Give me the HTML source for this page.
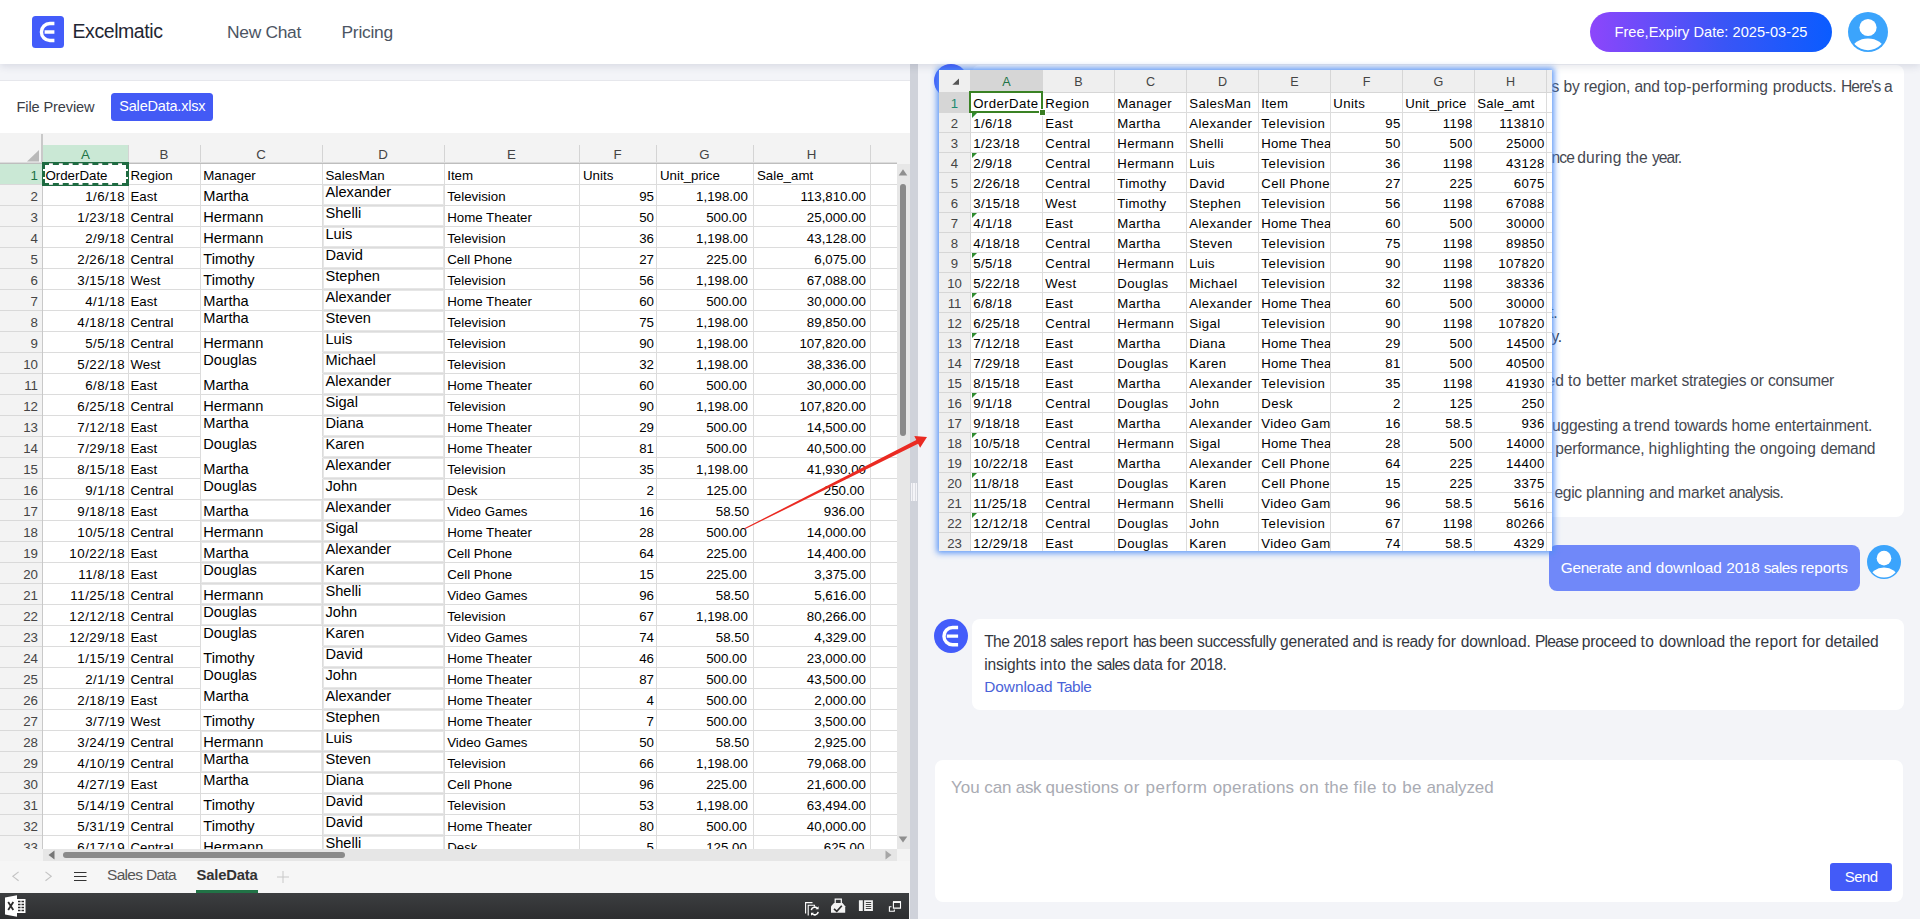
<!DOCTYPE html>
<html lang="en"><head><meta charset="utf-8"><title>Excelmatic</title>
<style>
*{box-sizing:border-box;margin:0;padding:0}
html,body{width:1920px;height:919px;overflow:hidden;background:#f3f4f8;font-family:"Liberation Sans",sans-serif;}
.t{position:absolute;white-space:nowrap;}
.a{position:absolute;}
#hdr{position:absolute;left:0;top:0;width:1920px;height:64px;background:#fff;box-shadow:0 2px 8px rgba(40,50,90,.14);z-index:5}
#left{position:absolute;left:0;top:80px;width:910px;height:839px;background:#fff;overflow:hidden}
#lline{position:absolute;left:0;top:80px;width:910px;height:1px;background:#e6e7ec}
#divd{position:absolute;left:910px;top:64px;width:7.500px;height:855px;background:#cfd2da}
/* sheet */
#sheet{position:absolute;left:0;top:53px;width:910px;height:786px;background:#f3f3f3;overflow:hidden;font-size:13.3px;color:#000}
.r{position:absolute;left:0;width:897px;height:21px;}
.r i,.r b,.r u,.r s,.r em{position:absolute;top:0;height:21px;font-style:normal;font-weight:400;text-decoration:none;white-space:nowrap;overflow:hidden;line-height:21px}
.rh{left:0;width:42px;text-align:right;padding:.7px 4px 0 0;color:#444;background:#f3f3f3;border-bottom:1px solid #d9d9d9}
.c{background:#fff;border-right:1px solid #dcdcdc;border-bottom:1px solid #dcdcdc;padding:1px 3px 0 3px}
.cA{left:43px;width:86px;text-align:right;padding-right:2.9px;letter-spacing:.5px}
.cB{left:129px;width:72px;padding-left:1.5px}
.cC{left:201px;width:122px;font-size:14.6px;padding-left:2.3px}
.cD{left:323px;width:122px;font-size:14.6px;padding-left:2.5px}
.cE{left:445px;width:135px;padding-left:2.2px}
.cF{left:580px;width:77px;text-align:right;padding-right:2px}
.cG{left:657px;width:97px;text-align:right;padding-right:5.2px}
.cH{left:754px;width:117px;text-align:right;padding-right:4px}
.cI{left:871px;width:26px;border-right:0}
.n{text-align:right}
</style></head><body>

<div id="hdr">
<div class="a" style="left:32px;top:16px;width:32px;height:32px;border-radius:3.5px;background:#435cfa"></div>
<svg class="a" style="left:32px;top:16px" width="32" height="32" viewBox="0 0 32 32"><path d="M22.4 7.5H17.9A8.5 8.5 0 0 0 17.9 24.5H22.4M12.600 16H22.4" fill="none" stroke="#fff" stroke-width="3.4"/></svg>
<span class="t" style="left:72.50px;top:20.14px;font-size:19.50px;line-height:23px;color:#1f2633;letter-spacing:-0.427px;">Excelmatic</span>
<span class="t" style="left:227.00px;top:21.87px;font-size:17.40px;line-height:21px;color:#4b5563;letter-spacing:-0.300px;">New Chat</span>
<span class="t" style="left:341.50px;top:21.87px;font-size:17.40px;line-height:21px;color:#4b5563;letter-spacing:-0.241px;">Pricing</span>
<div class="a" style="left:1590px;top:12px;width:242px;height:40px;border-radius:20px;background:linear-gradient(90deg,#8d46fb 0%,#3a55f6 55%,#0a5cff 100%)"></div>
<span class="t" style="left:1614.50px;top:22.94px;font-size:14.60px;line-height:18px;color:#fff;letter-spacing:0.024px;">Free,Expiry Date: 2025-03-25</span>
<svg class="a" style="left:1848px;top:12px" width="40" height="40" viewBox="0 0 40 40"><defs><clipPath id="cp"><circle cx="20" cy="20" r="18.2"/></clipPath></defs><circle cx="20" cy="20" r="20" fill="#3ba4fc"/><g clip-path="url(#cp)" fill="#fff"><circle cx="20" cy="15.5" r="8.6"/><ellipse cx="20" cy="38" rx="16" ry="11.5"/></g></svg>
</div>
<div id="divd"></div>
<div id="left"><div id="lline" style="top:0"></div>
<span class="t" style="left:16.50px;top:17.64px;font-size:14.60px;line-height:18px;color:#3a3d46;letter-spacing:-0.126px;">File Preview</span>
<div class="a" style="left:111px;top:13px;width:102px;height:28px;border-radius:3.5px;background:#435af5"></div>
<span class="t" style="left:119.30px;top:18.48px;font-size:14.50px;line-height:17px;color:#fff;letter-spacing:-0.204px;">SaleData.xlsx</span>
<div id="sheet">
<div class="a" style="left:41.4px;top:1px;width:1.800px;height:800px;background:#c9c9c9"></div>
<div class="a" style="left:43px;top:12px;width:85px;height:18px;background:#cae8d5"></div>
<span class="t" style="left:43px;top:12px;width:85px;text-align:center;font-size:13.3px;line-height:19px;color:#217346">A</span>
<div class="a" style="left:128px;top:12px;width:1px;height:18px;background:#d4d4d4"></div>
<span class="t" style="left:128px;top:12px;width:72px;text-align:center;font-size:13.3px;line-height:19px;color:#444">B</span>
<div class="a" style="left:200px;top:12px;width:1px;height:18px;background:#d4d4d4"></div>
<span class="t" style="left:200px;top:12px;width:122px;text-align:center;font-size:13.3px;line-height:19px;color:#444">C</span>
<div class="a" style="left:322px;top:12px;width:1px;height:18px;background:#d4d4d4"></div>
<span class="t" style="left:322px;top:12px;width:122px;text-align:center;font-size:13.3px;line-height:19px;color:#444">D</span>
<div class="a" style="left:444px;top:12px;width:1px;height:18px;background:#d4d4d4"></div>
<span class="t" style="left:444px;top:12px;width:135px;text-align:center;font-size:13.3px;line-height:19px;color:#444">E</span>
<div class="a" style="left:579px;top:12px;width:1px;height:18px;background:#d4d4d4"></div>
<span class="t" style="left:579px;top:12px;width:77px;text-align:center;font-size:13.3px;line-height:19px;color:#444">F</span>
<div class="a" style="left:656px;top:12px;width:1px;height:18px;background:#d4d4d4"></div>
<span class="t" style="left:656px;top:12px;width:97px;text-align:center;font-size:13.3px;line-height:19px;color:#444">G</span>
<div class="a" style="left:753px;top:12px;width:1px;height:18px;background:#d4d4d4"></div>
<span class="t" style="left:753px;top:12px;width:117px;text-align:center;font-size:13.3px;line-height:19px;color:#444">H</span>
<div class="a" style="left:870px;top:12px;width:1px;height:18px;background:#d4d4d4"></div>
<div class="a" style="left:0;top:29px;width:897px;height:1px;background:#dcdcdc"></div><div class="a" style="left:0;top:30px;width:897px;height:1px;background:#bebebe"></div>
<svg class="a" style="left:27px;top:17px" width="13" height="12" viewBox="0 0 13 12"><path d="M12 0V11.5H0Z" fill="#b9b9b9"/></svg>
<div class="r" style="top:31px">
<i class="rh" style="background:#cae8d5;color:#217346">1</i>
<i class="c cA" style="text-align:left;padding-left:2.4px;letter-spacing:0">OrderDate</i>
<i class="c cB">Region</i>
<i class="c cC" style="font-size:13.3px">Manager</i>
<i class="c cD" style="font-size:13.3px">SalesMan</i>
<i class="c cE">Item</i>
<i class="c cF" style="text-align:left;padding-left:3px;letter-spacing:0">Units</i>
<i class="c cG" style="text-align:left;padding-left:3px;letter-spacing:0">Unit_price</i>
<i class="c cH" style="text-align:left;padding-left:3px;letter-spacing:0">Sale_amt</i>
<i class="c cI"></i>
</div>
<div class="r" style="top:52px">
<i class="rh">2</i>
<i class="c cA">1/6/18</i>
<i class="c cB">East</i>
<i class="c cC">Martha</i>
<i class="c cD" style="line-height:13px;box-shadow:inset 0 0 0 1px #e6e6e6">Alexander</i>
<i class="c cE">Television</i>
<i class="c cF">95</i>
<i class="c cG">1,198.00</i>
<i class="c cH">113,810.00</i>
<i class="c cI"></i>
</div>
<div class="r" style="top:73px">
<i class="rh">3</i>
<i class="c cA">1/23/18</i>
<i class="c cB">Central</i>
<i class="c cC">Hermann</i>
<i class="c cD" style="line-height:13px;box-shadow:inset 0 0 0 1px #e6e6e6">Shelli</i>
<i class="c cE">Home Theater</i>
<i class="c cF">50</i>
<i class="c cG" style="padding-right:6.2px">500.00</i>
<i class="c cH">25,000.00</i>
<i class="c cI"></i>
</div>
<div class="r" style="top:94px">
<i class="rh">4</i>
<i class="c cA">2/9/18</i>
<i class="c cB">Central</i>
<i class="c cC">Hermann</i>
<i class="c cD" style="line-height:13px;box-shadow:inset 0 0 0 1px #e6e6e6">Luis</i>
<i class="c cE">Television</i>
<i class="c cF">36</i>
<i class="c cG">1,198.00</i>
<i class="c cH">43,128.00</i>
<i class="c cI"></i>
</div>
<div class="r" style="top:115px">
<i class="rh">5</i>
<i class="c cA">2/26/18</i>
<i class="c cB">Central</i>
<i class="c cC">Timothy</i>
<i class="c cD" style="line-height:13px;box-shadow:inset 0 0 0 1px #e6e6e6">David</i>
<i class="c cE">Cell Phone</i>
<i class="c cF">27</i>
<i class="c cG" style="padding-right:6.2px">225.00</i>
<i class="c cH">6,075.00</i>
<i class="c cI"></i>
</div>
<div class="r" style="top:136px">
<i class="rh">6</i>
<i class="c cA">3/15/18</i>
<i class="c cB">West</i>
<i class="c cC">Timothy</i>
<i class="c cD" style="line-height:13px;box-shadow:inset 0 0 0 1px #e6e6e6">Stephen</i>
<i class="c cE">Television</i>
<i class="c cF">56</i>
<i class="c cG">1,198.00</i>
<i class="c cH">67,088.00</i>
<i class="c cI"></i>
</div>
<div class="r" style="top:157px">
<i class="rh">7</i>
<i class="c cA">4/1/18</i>
<i class="c cB">East</i>
<i class="c cC">Martha</i>
<i class="c cD" style="line-height:13px;box-shadow:inset 0 0 0 1px #e6e6e6">Alexander</i>
<i class="c cE">Home Theater</i>
<i class="c cF">60</i>
<i class="c cG" style="padding-right:6.2px">500.00</i>
<i class="c cH">30,000.00</i>
<i class="c cI"></i>
</div>
<div class="r" style="top:178px">
<i class="rh">8</i>
<i class="c cA">4/18/18</i>
<i class="c cB">Central</i>
<i class="c cC" style="line-height:13px;">Martha</i>
<i class="c cD" style="line-height:13px;box-shadow:inset 0 0 0 1px #e6e6e6">Steven</i>
<i class="c cE">Television</i>
<i class="c cF">75</i>
<i class="c cG">1,198.00</i>
<i class="c cH">89,850.00</i>
<i class="c cI"></i>
</div>
<div class="r" style="top:199px">
<i class="rh">9</i>
<i class="c cA">5/5/18</i>
<i class="c cB">Central</i>
<i class="c cC" style="border-bottom-color:#fff;">Hermann</i>
<i class="c cD" style="line-height:13px;box-shadow:inset 0 0 0 1px #e6e6e6">Luis</i>
<i class="c cE">Television</i>
<i class="c cF">90</i>
<i class="c cG">1,198.00</i>
<i class="c cH">107,820.00</i>
<i class="c cI"></i>
</div>
<div class="r" style="top:220px">
<i class="rh">10</i>
<i class="c cA">5/22/18</i>
<i class="c cB">West</i>
<i class="c cC" style="line-height:13px;border-bottom-color:#fff;">Douglas</i>
<i class="c cD" style="line-height:13px;box-shadow:inset 0 0 0 1px #e6e6e6">Michael</i>
<i class="c cE">Television</i>
<i class="c cF">32</i>
<i class="c cG">1,198.00</i>
<i class="c cH">38,336.00</i>
<i class="c cI"></i>
</div>
<div class="r" style="top:241px">
<i class="rh">11</i>
<i class="c cA">6/8/18</i>
<i class="c cB">East</i>
<i class="c cC">Martha</i>
<i class="c cD" style="line-height:13px;box-shadow:inset 0 0 0 1px #e6e6e6">Alexander</i>
<i class="c cE">Home Theater</i>
<i class="c cF">60</i>
<i class="c cG" style="padding-right:6.2px">500.00</i>
<i class="c cH">30,000.00</i>
<i class="c cI"></i>
</div>
<div class="r" style="top:262px">
<i class="rh">12</i>
<i class="c cA">6/25/18</i>
<i class="c cB">Central</i>
<i class="c cC">Hermann</i>
<i class="c cD" style="line-height:13px;box-shadow:inset 0 0 0 1px #e6e6e6">Sigal</i>
<i class="c cE">Television</i>
<i class="c cF">90</i>
<i class="c cG">1,198.00</i>
<i class="c cH">107,820.00</i>
<i class="c cI"></i>
</div>
<div class="r" style="top:283px">
<i class="rh">13</i>
<i class="c cA">7/12/18</i>
<i class="c cB">East</i>
<i class="c cC" style="line-height:13px;border-bottom-color:#fff;">Martha</i>
<i class="c cD" style="line-height:13px;box-shadow:inset 0 0 0 1px #e6e6e6">Diana</i>
<i class="c cE">Home Theater</i>
<i class="c cF">29</i>
<i class="c cG" style="padding-right:6.2px">500.00</i>
<i class="c cH">14,500.00</i>
<i class="c cI"></i>
</div>
<div class="r" style="top:304px">
<i class="rh">14</i>
<i class="c cA">7/29/18</i>
<i class="c cB">East</i>
<i class="c cC" style="line-height:13px;border-bottom-color:#fff;">Douglas</i>
<i class="c cD" style="line-height:13px;box-shadow:inset 0 0 0 1px #e6e6e6">Karen</i>
<i class="c cE">Home Theater</i>
<i class="c cF">81</i>
<i class="c cG" style="padding-right:6.2px">500.00</i>
<i class="c cH">40,500.00</i>
<i class="c cI"></i>
</div>
<div class="r" style="top:325px">
<i class="rh">15</i>
<i class="c cA">8/15/18</i>
<i class="c cB">East</i>
<i class="c cC" style="border-bottom-color:#fff;">Martha</i>
<i class="c cD" style="line-height:13px;box-shadow:inset 0 0 0 1px #e6e6e6">Alexander</i>
<i class="c cE">Television</i>
<i class="c cF">35</i>
<i class="c cG">1,198.00</i>
<i class="c cH">41,930.00</i>
<i class="c cI"></i>
</div>
<div class="r" style="top:346px">
<i class="rh">16</i>
<i class="c cA">9/1/18</i>
<i class="c cB">Central</i>
<i class="c cC" style="line-height:13px;">Douglas</i>
<i class="c cD" style="line-height:13px;box-shadow:inset 0 0 0 1px #e6e6e6">John</i>
<i class="c cE">Desk</i>
<i class="c cF">2</i>
<i class="c cG" style="padding-right:6.2px">125.00</i>
<i class="c cH" style="padding-right:5.6px">250.00</i>
<i class="c cI"></i>
</div>
<div class="r" style="top:367px">
<i class="rh">17</i>
<i class="c cA">9/18/18</i>
<i class="c cB">East</i>
<i class="c cC" style="box-shadow:inset 0 0 0 1px #e6e6e6;">Martha</i>
<i class="c cD" style="line-height:13px;box-shadow:inset 0 0 0 1px #e6e6e6">Alexander</i>
<i class="c cE">Video Games</i>
<i class="c cF">16</i>
<i class="c cG" style="padding-right:3.9px">58.50</i>
<i class="c cH" style="padding-right:5.6px">936.00</i>
<i class="c cI"></i>
</div>
<div class="r" style="top:388px">
<i class="rh">18</i>
<i class="c cA">10/5/18</i>
<i class="c cB">Central</i>
<i class="c cC" style="box-shadow:inset 0 0 0 1px #e6e6e6;">Hermann</i>
<i class="c cD" style="line-height:13px;box-shadow:inset 0 0 0 1px #e6e6e6">Sigal</i>
<i class="c cE">Home Theater</i>
<i class="c cF">28</i>
<i class="c cG" style="padding-right:6.2px">500.00</i>
<i class="c cH">14,000.00</i>
<i class="c cI"></i>
</div>
<div class="r" style="top:409px">
<i class="rh">19</i>
<i class="c cA">10/22/18</i>
<i class="c cB">East</i>
<i class="c cC" style="box-shadow:inset 0 0 0 1px #e6e6e6;">Martha</i>
<i class="c cD" style="line-height:13px;box-shadow:inset 0 0 0 1px #e6e6e6">Alexander</i>
<i class="c cE">Cell Phone</i>
<i class="c cF">64</i>
<i class="c cG" style="padding-right:6.2px">225.00</i>
<i class="c cH">14,400.00</i>
<i class="c cI"></i>
</div>
<div class="r" style="top:430px">
<i class="rh">20</i>
<i class="c cA">11/8/18</i>
<i class="c cB">East</i>
<i class="c cC" style="line-height:13px;box-shadow:inset 0 0 0 1px #e6e6e6;">Douglas</i>
<i class="c cD" style="line-height:13px;box-shadow:inset 0 0 0 1px #e6e6e6">Karen</i>
<i class="c cE">Cell Phone</i>
<i class="c cF">15</i>
<i class="c cG" style="padding-right:6.2px">225.00</i>
<i class="c cH">3,375.00</i>
<i class="c cI"></i>
</div>
<div class="r" style="top:451px">
<i class="rh">21</i>
<i class="c cA">11/25/18</i>
<i class="c cB">Central</i>
<i class="c cC" style="box-shadow:inset 0 0 0 1px #e6e6e6;">Hermann</i>
<i class="c cD" style="line-height:13px;box-shadow:inset 0 0 0 1px #e6e6e6">Shelli</i>
<i class="c cE">Video Games</i>
<i class="c cF">96</i>
<i class="c cG" style="padding-right:3.9px">58.50</i>
<i class="c cH">5,616.00</i>
<i class="c cI"></i>
</div>
<div class="r" style="top:472px">
<i class="rh">22</i>
<i class="c cA">12/12/18</i>
<i class="c cB">Central</i>
<i class="c cC" style="line-height:13px;box-shadow:inset 0 0 0 1px #e6e6e6;">Douglas</i>
<i class="c cD" style="line-height:13px;box-shadow:inset 0 0 0 1px #e6e6e6">John</i>
<i class="c cE">Television</i>
<i class="c cF">67</i>
<i class="c cG">1,198.00</i>
<i class="c cH">80,266.00</i>
<i class="c cI"></i>
</div>
<div class="r" style="top:493px">
<i class="rh">23</i>
<i class="c cA">12/29/18</i>
<i class="c cB">East</i>
<i class="c cC" style="line-height:13px;border-bottom-color:#fff;">Douglas</i>
<i class="c cD" style="line-height:13px;box-shadow:inset 0 0 0 1px #e6e6e6">Karen</i>
<i class="c cE">Video Games</i>
<i class="c cF">74</i>
<i class="c cG" style="padding-right:3.9px">58.50</i>
<i class="c cH">4,329.00</i>
<i class="c cI"></i>
</div>
<div class="r" style="top:514px">
<i class="rh">24</i>
<i class="c cA">1/15/19</i>
<i class="c cB">Central</i>
<i class="c cC" style="border-bottom-color:#fff;">Timothy</i>
<i class="c cD" style="line-height:13px;box-shadow:inset 0 0 0 1px #e6e6e6">David</i>
<i class="c cE">Home Theater</i>
<i class="c cF">46</i>
<i class="c cG" style="padding-right:6.2px">500.00</i>
<i class="c cH">23,000.00</i>
<i class="c cI"></i>
</div>
<div class="r" style="top:535px">
<i class="rh">25</i>
<i class="c cA">2/1/19</i>
<i class="c cB">Central</i>
<i class="c cC" style="line-height:13px;border-bottom-color:#fff;">Douglas</i>
<i class="c cD" style="line-height:13px;box-shadow:inset 0 0 0 1px #e6e6e6">John</i>
<i class="c cE">Home Theater</i>
<i class="c cF">87</i>
<i class="c cG" style="padding-right:6.2px">500.00</i>
<i class="c cH">43,500.00</i>
<i class="c cI"></i>
</div>
<div class="r" style="top:556px">
<i class="rh">26</i>
<i class="c cA">2/18/19</i>
<i class="c cB">East</i>
<i class="c cC" style="line-height:13px;">Martha</i>
<i class="c cD" style="line-height:13px;box-shadow:inset 0 0 0 1px #e6e6e6">Alexander</i>
<i class="c cE">Home Theater</i>
<i class="c cF">4</i>
<i class="c cG" style="padding-right:6.2px">500.00</i>
<i class="c cH">2,000.00</i>
<i class="c cI"></i>
</div>
<div class="r" style="top:577px">
<i class="rh">27</i>
<i class="c cA">3/7/19</i>
<i class="c cB">West</i>
<i class="c cC">Timothy</i>
<i class="c cD" style="line-height:13px;box-shadow:inset 0 0 0 1px #e6e6e6">Stephen</i>
<i class="c cE">Home Theater</i>
<i class="c cF">7</i>
<i class="c cG" style="padding-right:6.2px">500.00</i>
<i class="c cH">3,500.00</i>
<i class="c cI"></i>
</div>
<div class="r" style="top:598px">
<i class="rh">28</i>
<i class="c cA">3/24/19</i>
<i class="c cB">Central</i>
<i class="c cC" style="box-shadow:inset 0 0 0 1px #e6e6e6;">Hermann</i>
<i class="c cD" style="line-height:13px;box-shadow:inset 0 0 0 1px #e6e6e6">Luis</i>
<i class="c cE">Video Games</i>
<i class="c cF">50</i>
<i class="c cG" style="padding-right:3.9px">58.50</i>
<i class="c cH">2,925.00</i>
<i class="c cI"></i>
</div>
<div class="r" style="top:619px">
<i class="rh">29</i>
<i class="c cA">4/10/19</i>
<i class="c cB">Central</i>
<i class="c cC" style="line-height:13px;box-shadow:inset 0 0 0 1px #e6e6e6;">Martha</i>
<i class="c cD" style="line-height:13px;box-shadow:inset 0 0 0 1px #e6e6e6">Steven</i>
<i class="c cE">Television</i>
<i class="c cF">66</i>
<i class="c cG">1,198.00</i>
<i class="c cH">79,068.00</i>
<i class="c cI"></i>
</div>
<div class="r" style="top:640px">
<i class="rh">30</i>
<i class="c cA">4/27/19</i>
<i class="c cB">East</i>
<i class="c cC" style="line-height:13px;">Martha</i>
<i class="c cD" style="line-height:13px;box-shadow:inset 0 0 0 1px #e6e6e6">Diana</i>
<i class="c cE">Cell Phone</i>
<i class="c cF">96</i>
<i class="c cG" style="padding-right:6.2px">225.00</i>
<i class="c cH">21,600.00</i>
<i class="c cI"></i>
</div>
<div class="r" style="top:661px">
<i class="rh">31</i>
<i class="c cA">5/14/19</i>
<i class="c cB">Central</i>
<i class="c cC">Timothy</i>
<i class="c cD" style="line-height:13px;box-shadow:inset 0 0 0 1px #e6e6e6">David</i>
<i class="c cE">Television</i>
<i class="c cF">53</i>
<i class="c cG">1,198.00</i>
<i class="c cH">63,494.00</i>
<i class="c cI"></i>
</div>
<div class="r" style="top:682px">
<i class="rh">32</i>
<i class="c cA">5/31/19</i>
<i class="c cB">Central</i>
<i class="c cC">Timothy</i>
<i class="c cD" style="line-height:13px;box-shadow:inset 0 0 0 1px #e6e6e6">David</i>
<i class="c cE">Home Theater</i>
<i class="c cF">80</i>
<i class="c cG" style="padding-right:6.2px">500.00</i>
<i class="c cH">40,000.00</i>
<i class="c cI"></i>
</div>
<div class="r" style="top:703px">
<i class="rh">33</i>
<i class="c cA">6/17/19</i>
<i class="c cB">Central</i>
<i class="c cC">Hermann</i>
<i class="c cD" style="line-height:13px;box-shadow:inset 0 0 0 1px #e6e6e6">Shelli</i>
<i class="c cE">Desk</i>
<i class="c cF">5</i>
<i class="c cG" style="padding-right:6.2px">125.00</i>
<i class="c cH" style="padding-right:5.6px">625.00</i>
<i class="c cI"></i>
</div>
<div class="a" style="left:41.5px;top:29px;width:87.5px;height:24px;border:1px solid #1e6b41"><div style="width:100%;height:100%;border:2px dashed #1e6b41"></div></div>
<div class="a" style="left:897px;top:31px;width:13px;height:686px;background:#e7e7e7"></div>
<svg class="a" style="left:898px;top:36px" width="10" height="7" viewBox="0 0 10 7"><path d="M5 0.3L9.3 6.500H0.700Z" fill="#8f8f8f"/></svg>
<div class="a" style="left:900px;top:51px;width:6px;height:252px;border-radius:3px;background:#8a8a8a"></div>
<svg class="a" style="left:898px;top:703px" width="10" height="7" viewBox="0 0 10 7"><path d="M5 6.500L9.300 0.500H0.700Z" fill="#8f8f8f"/></svg>
<div class="a" style="left:0;top:716px;width:910px;height:13px;background:#f3f3f3"></div>
<div class="a" style="left:43px;top:716px;width:854px;height:12px;background:#e6e6e6"></div>
<svg class="a" style="left:48px;top:717px" width="7" height="10" viewBox="0 0 7 10"><path d="M0.5 5L6.5 0.5V9.5Z" fill="#777"/></svg>
<svg class="a" style="left:885px;top:717px" width="7" height="10" viewBox="0 0 7 10"><path d="M6.5 5L0.5 0.5V9.5Z" fill="#a6a6a6"/></svg>
<div class="a" style="left:63px;top:719px;width:282px;height:6px;border-radius:3px;background:#8a8a8a"></div>
<div class="a" style="left:0;top:728px;width:910px;height:32px;background:#f6f6f6"></div>
<svg class="a" style="left:10px;top:738px" width="50" height="14" viewBox="0 0 50 14"><path d="M8.600 0.900L2.900 5.350L8.600 9.800M35.500 0.900L41.200 5.350L35.500 9.800" fill="none" stroke="#c4c4c4" stroke-width="1.2"/></svg>
<svg class="a" style="left:74px;top:738px" width="13" height="12" viewBox="0 0 13 12"><path d="M0 1.5H12.5M0 5.5H12.5M0 9.5H12.5" stroke="#333" stroke-width="1.2"/></svg>
<span class="t" style="left:107.00px;top:732.23px;font-size:15.50px;line-height:19px;color:#555;letter-spacing:-0.682px;">Sales Data</span>
<span class="t" style="left:196.50px;top:732.87px;font-size:14.80px;line-height:18px;color:#333;font-weight:700;letter-spacing:-0.191px;">SaleData</span>
<svg class="a" style="left:277px;top:738px" width="12" height="12" viewBox="0 0 12 12"><path d="M6 0V12M0 6H12" stroke="#c8c8c8" stroke-width="1"/></svg>
<div class="a" style="left:196px;top:757px;width:62px;height:3px;background:#217346"></div>
<div class="a" style="left:0;top:760px;width:910px;height:26px;background:#f0f0f0"></div><div class="a" style="left:0;top:760px;width:909px;height:26px;background:linear-gradient(#3c3e40,#2d2e30)"></div>
<svg class="a" style="left:5px;top:762px" width="21" height="22" viewBox="0 0 21 22"><path d="M9 4H20.5V18H9Z" fill="#fff"/><path d="M13 6.5h2.5M16.5 6.5H19M13 9.5h2.5M16.5 9.5H19M13 12.5h2.5M16.5 12.5H19M13 15.5h2.5M16.5 15.5H19" stroke="#2d2d2d" stroke-width="1.6"/><path d="M0 2.5L12 0.3V21.7L0 19.5Z" fill="#fff"/><path d="M3.2 7L8.3 15M8.3 7L3.2 15" stroke="#2d2d2d" stroke-width="1.8"/></svg>
<svg class="a" style="left:803px;top:764px" width="100" height="20" viewBox="0 0 100 20" fill="none" stroke="#fff" stroke-width="1.1"><path d="M2.600 16.500V5.600H9.500M5.200 18.600V8.200H11.500V9.500"/><path d="M8.300 13.200a3.500 3.500 0 0 1 6.300-1.600M15.200 14.800a3.500 3.500 0 0 1-6.300 1.600" stroke-width="1.500"/><path d="M15.600 9.300v2.900h-2.900ZM8 18.700v-2.900h2.900Z" fill="#fff" stroke="none"/><path d="M31 5.900H39.500L42.200 9.250V15.700H28V9.250Z" fill="#f2f2f2" stroke="none"/><path d="M32.200 6V2.200H38.300V6" stroke-width="1.200"/><path d="M31 11.800L33.800 14.300L38.800 8.700" stroke="#2d2d2d" stroke-width="1.700"/><path d="M55.900 3.200H59.800V14H55.900ZM61.100 3.200H69.900V14H61.100Z" fill="#f2f2f2" stroke="none"/><path d="M62.800 5.500h5.400M62.800 7.500h5.400M62.800 9.500h5.400M62.800 11.500h5.400" stroke="#444" stroke-width="1"/><path d="M90.400 5.200H97.500V11.100H90.400Z"/><path d="M90 5H98" stroke-width="1.800"/><path d="M88.500 9.800H86.400V14.200H91.300V12.500"/></svg>
</div>
</div>
<style>
#ov{position:absolute;left:939px;top:70px;width:613px;height:481px;background:#fff;overflow:hidden;font-size:13.2px;color:#000;z-index:7}
#ovg{position:absolute;left:939px;top:70px;width:613px;height:481px;z-index:6;box-shadow:0 0 6px 2px rgba(75,140,245,.92)}
.o{position:absolute;left:0;width:613px;height:20px}
.o i{position:absolute;top:0;height:20px;font-style:normal;white-space:nowrap;overflow:hidden;line-height:20px;letter-spacing:.42px;border-right:1px solid #dcdcdc;border-bottom:1px solid #dcdcdc;padding:1px 0 0 2.2px;width:72px;background:#fff}
.o .h{left:0;width:32px;background:#efefef;color:#444;text-align:center;padding-left:0;letter-spacing:0;border-color:#d6d6d6}
.o .n{text-align:right;padding-right:1.3px}
.k0{left:32px}.k1{left:104px}.k2{left:176px}.k3{left:248px}.k4{left:320px}.k5{left:392px}.k6{left:464px}.k7{left:536px}.k8{left:608px}
.g{position:absolute;left:33px;width:0;height:0;border-top:5px solid #2e8b2e;border-right:5px solid transparent}
.card{position:absolute;background:#fff;border-radius:8px}
</style>
<div class="card" style="left:972px;top:65px;width:932px;height:452px"></div>
<svg class="a" style="left:934px;top:64px" width="34" height="34" viewBox="0 0 34 34"><circle cx="17" cy="17" r="17" fill="#435cfa"/><path d="M24.100 8.550H18.550A8.600 8.600 0 0 0 18.550 25.750H24.100M12.800 17.150H24.100" fill="none" stroke="#fff" stroke-width="3.400"/></svg>
<span class="t" style="left:1551.60px;top:76.89px;font-size:15.60px;line-height:19px;color:#454851;letter-spacing:-0.167px;white-space:pre;">s </span><span class="t" style="left:1563.40px;top:76.89px;font-size:15.60px;line-height:19px;color:#454851;letter-spacing:-0.137px;white-space:pre;">by </span><span class="t" style="left:1583.80px;top:76.89px;font-size:15.60px;line-height:19px;color:#454851;letter-spacing:-0.179px;white-space:pre;">region, </span><span class="t" style="left:1634.40px;top:76.89px;font-size:15.60px;line-height:19px;color:#454851;letter-spacing:-0.191px;white-space:pre;">and </span><span class="t" style="left:1664.00px;top:76.89px;font-size:15.60px;line-height:19px;color:#454851;letter-spacing:0.201px;white-space:pre;">top-performing </span><span class="t" style="left:1772.80px;top:76.89px;font-size:15.60px;line-height:19px;color:#454851;letter-spacing:-0.040px;white-space:pre;">products. </span><span class="t" style="left:1840.90px;top:76.89px;font-size:15.60px;line-height:19px;color:#454851;letter-spacing:-0.832px;white-space:pre;">Here&#x27;s </span><span class="t" style="left:1884.00px;top:76.89px;font-size:15.60px;line-height:19px;color:#454851;letter-spacing:-1.376px;">a</span>
<span class="t" style="left:1551.60px;top:148.09px;font-size:15.60px;line-height:19px;color:#454851;letter-spacing:-0.947px;white-space:pre;">nce </span><span class="t" style="left:1577.30px;top:148.09px;font-size:15.60px;line-height:19px;color:#454851;letter-spacing:0.143px;white-space:pre;">during </span><span class="t" style="left:1626.00px;top:148.09px;font-size:15.60px;line-height:19px;color:#454851;letter-spacing:-0.030px;white-space:pre;">the </span><span class="t" style="left:1651.90px;top:148.09px;font-size:15.60px;line-height:19px;color:#454851;letter-spacing:-0.884px;">year.</span>
<span class="t" style="left:1549.30px;top:303.49px;font-size:15.60px;line-height:19px;color:#34373f;letter-spacing:-0.334px;">t.</span>
<span class="t" style="left:1551.60px;top:327.09px;font-size:15.60px;line-height:19px;color:#34373f;letter-spacing:-0.588px;">y.</span>
<span class="t" style="left:1546.60px;top:370.89px;font-size:15.60px;line-height:19px;color:#454851;letter-spacing:-0.129px;white-space:pre;">ed </span><span class="t" style="left:1567.90px;top:370.89px;font-size:15.60px;line-height:19px;color:#454851;letter-spacing:0.219px;white-space:pre;">to </span><span class="t" style="left:1585.90px;top:370.89px;font-size:15.60px;line-height:19px;color:#454851;letter-spacing:0.025px;white-space:pre;">better </span><span class="t" style="left:1630.30px;top:370.89px;font-size:15.60px;line-height:19px;color:#454851;letter-spacing:-0.116px;white-space:pre;">market </span><span class="t" style="left:1681.50px;top:370.89px;font-size:15.60px;line-height:19px;color:#454851;letter-spacing:-0.288px;white-space:pre;">strategies </span><span class="t" style="left:1750.30px;top:370.89px;font-size:15.60px;line-height:19px;color:#454851;letter-spacing:-0.135px;white-space:pre;">or </span><span class="t" style="left:1768.10px;top:370.89px;font-size:15.60px;line-height:19px;color:#454851;letter-spacing:-0.325px;">consumer</span>
<span class="t" style="left:1552.10px;top:415.89px;font-size:15.60px;line-height:19px;color:#454851;letter-spacing:-0.179px;white-space:pre;">uggesting </span><span class="t" style="left:1622.30px;top:415.89px;font-size:15.60px;line-height:19px;color:#454851;letter-spacing:-0.605px;white-space:pre;">a </span><span class="t" style="left:1634.10px;top:415.89px;font-size:15.60px;line-height:19px;color:#454851;letter-spacing:0.068px;white-space:pre;">trend </span><span class="t" style="left:1674.40px;top:415.89px;font-size:15.60px;line-height:19px;color:#454851;letter-spacing:-0.220px;white-space:pre;">towards </span><span class="t" style="left:1731.60px;top:415.89px;font-size:15.60px;line-height:19px;color:#454851;letter-spacing:-0.052px;white-space:pre;">home </span><span class="t" style="left:1774.70px;top:415.89px;font-size:15.60px;line-height:19px;color:#454851;letter-spacing:-0.152px;">entertainment.</span>
<span class="t" style="left:1555.30px;top:438.79px;font-size:15.60px;line-height:19px;color:#454851;letter-spacing:-0.234px;white-space:pre;">performance, </span><span class="t" style="left:1648.50px;top:438.79px;font-size:15.60px;line-height:19px;color:#454851;letter-spacing:0.203px;white-space:pre;">highlighting </span><span class="t" style="left:1734.40px;top:438.79px;font-size:15.60px;line-height:19px;color:#454851;letter-spacing:-0.180px;white-space:pre;">the </span><span class="t" style="left:1759.70px;top:438.79px;font-size:15.60px;line-height:19px;color:#454851;letter-spacing:0.130px;white-space:pre;">ongoing </span><span class="t" style="left:1820.60px;top:438.79px;font-size:15.60px;line-height:19px;color:#454851;letter-spacing:-0.296px;">demand</span>
<span class="t" style="left:1554.40px;top:483.09px;font-size:15.60px;line-height:19px;color:#454851;letter-spacing:-0.291px;white-space:pre;">egic </span><span class="t" style="left:1585.90px;top:483.09px;font-size:15.60px;line-height:19px;color:#454851;letter-spacing:-0.014px;white-space:pre;">planning </span><span class="t" style="left:1649.10px;top:483.09px;font-size:15.60px;line-height:19px;color:#454851;letter-spacing:-0.341px;white-space:pre;">and </span><span class="t" style="left:1678.10px;top:483.09px;font-size:15.60px;line-height:19px;color:#454851;letter-spacing:-0.187px;white-space:pre;">market </span><span class="t" style="left:1728.80px;top:483.09px;font-size:15.60px;line-height:19px;color:#454851;letter-spacing:-0.711px;">analysis.</span>
<div class="a" style="left:1549px;top:545px;width:311px;height:46px;border-radius:8px;background:#7088f9"></div>
<span class="t" style="left:1560.80px;top:558.66px;font-size:15.40px;line-height:18px;color:#fff;letter-spacing:-0.343px;white-space:pre;">Generate </span><span class="t" style="left:1626.20px;top:558.66px;font-size:15.40px;line-height:18px;color:#fff;letter-spacing:-0.093px;white-space:pre;">and </span><span class="t" style="left:1655.80px;top:558.66px;font-size:15.40px;line-height:18px;color:#fff;letter-spacing:0.032px;white-space:pre;">download </span><span class="t" style="left:1726.30px;top:558.66px;font-size:15.40px;line-height:18px;color:#fff;letter-spacing:-0.228px;white-space:pre;">2018 </span><span class="t" style="left:1763.70px;top:558.66px;font-size:15.40px;line-height:18px;color:#fff;letter-spacing:-0.522px;white-space:pre;">sales </span><span class="t" style="left:1800.80px;top:558.66px;font-size:15.40px;line-height:18px;color:#fff;letter-spacing:-0.133px;">reports</span>
<svg class="a" style="left:1866.9px;top:545.2px" width="34" height="34" viewBox="0 0 40 40"><circle cx="20" cy="20" r="20" fill="#3ba4fc"/><g clip-path="url(#cp)" fill="#fff"><circle cx="20" cy="15.5" r="8.6"/><ellipse cx="20" cy="38" rx="16" ry="11.500"/></g></svg>
<svg class="a" style="left:934px;top:619px" width="34" height="34" viewBox="0 0 34 34"><circle cx="17" cy="17" r="17" fill="#435cfa"/><path d="M24.100 8.550H18.550A8.600 8.600 0 0 0 18.550 25.750H24.100M12.800 17.150H24.100" fill="none" stroke="#fff" stroke-width="3.400"/></svg>
<div class="card" style="left:972px;top:619px;width:932px;height:91px"></div>
<span class="t" style="left:984.20px;top:632.49px;font-size:15.60px;line-height:19px;color:#34373f;letter-spacing:-0.604px;white-space:pre;">The </span><span class="t" style="left:1013.00px;top:632.49px;font-size:15.60px;line-height:19px;color:#34373f;letter-spacing:-0.408px;white-space:pre;">2018 </span><span class="t" style="left:1050.00px;top:632.49px;font-size:15.60px;line-height:19px;color:#34373f;letter-spacing:-0.759px;white-space:pre;">sales </span><span class="t" style="left:1086.20px;top:632.49px;font-size:15.60px;line-height:19px;color:#34373f;letter-spacing:0.245px;white-space:pre;">report </span><span class="t" style="left:1133.00px;top:632.49px;font-size:15.60px;line-height:19px;color:#34373f;letter-spacing:-0.822px;white-space:pre;">has </span><span class="t" style="left:1159.20px;top:632.49px;font-size:15.60px;line-height:19px;color:#34373f;letter-spacing:-0.248px;white-space:pre;">been </span><span class="t" style="left:1197.00px;top:632.49px;font-size:15.60px;line-height:19px;color:#34373f;letter-spacing:-0.418px;white-space:pre;">successfully </span><span class="t" style="left:1280.00px;top:632.49px;font-size:15.60px;line-height:19px;color:#34373f;letter-spacing:-0.210px;white-space:pre;">generated </span><span class="t" style="left:1352.50px;top:632.49px;font-size:15.60px;line-height:19px;color:#34373f;letter-spacing:-0.141px;white-space:pre;">and </span><span class="t" style="left:1382.30px;top:632.49px;font-size:15.60px;line-height:19px;color:#34373f;letter-spacing:-0.467px;white-space:pre;">is </span><span class="t" style="left:1396.50px;top:632.49px;font-size:15.60px;line-height:19px;color:#34373f;letter-spacing:-0.410px;white-space:pre;">ready </span><span class="t" style="left:1437.40px;top:632.49px;font-size:15.60px;line-height:19px;color:#34373f;letter-spacing:0.190px;white-space:pre;">for </span><span class="t" style="left:1460.70px;top:632.49px;font-size:15.60px;line-height:19px;color:#34373f;letter-spacing:-0.126px;white-space:pre;">download. </span><span class="t" style="left:1534.90px;top:632.49px;font-size:15.60px;line-height:19px;color:#34373f;letter-spacing:-0.734px;white-space:pre;">Please </span><span class="t" style="left:1581.80px;top:632.49px;font-size:15.60px;line-height:19px;color:#34373f;letter-spacing:-0.239px;white-space:pre;">proceed </span><span class="t" style="left:1640.60px;top:632.49px;font-size:15.60px;line-height:19px;color:#34373f;letter-spacing:0.352px;white-space:pre;">to </span><span class="t" style="left:1659.00px;top:632.49px;font-size:15.60px;line-height:19px;color:#34373f;letter-spacing:-0.080px;white-space:pre;">download </span><span class="t" style="left:1729.40px;top:632.49px;font-size:15.60px;line-height:19px;color:#34373f;letter-spacing:-0.080px;white-space:pre;">the </span><span class="t" style="left:1755.10px;top:632.49px;font-size:15.60px;line-height:19px;color:#34373f;letter-spacing:0.259px;white-space:pre;">report </span><span class="t" style="left:1802.00px;top:632.49px;font-size:15.60px;line-height:19px;color:#34373f;letter-spacing:0.115px;white-space:pre;">for </span><span class="t" style="left:1825.00px;top:632.49px;font-size:15.60px;line-height:19px;color:#34373f;letter-spacing:-0.143px;">detailed</span>
<span class="t" style="left:984.20px;top:655.09px;font-size:15.60px;line-height:19px;color:#34373f;letter-spacing:-0.159px;white-space:pre;">insights </span><span class="t" style="left:1040.00px;top:655.09px;font-size:15.60px;line-height:19px;color:#34373f;letter-spacing:0.263px;white-space:pre;">into </span><span class="t" style="left:1070.80px;top:655.09px;font-size:15.60px;line-height:19px;color:#34373f;letter-spacing:-0.005px;white-space:pre;">the </span><span class="t" style="left:1096.80px;top:655.09px;font-size:15.60px;line-height:19px;color:#34373f;letter-spacing:-0.759px;white-space:pre;">sales </span><span class="t" style="left:1133.00px;top:655.09px;font-size:15.60px;line-height:19px;color:#34373f;letter-spacing:-0.139px;white-space:pre;">data </span><span class="t" style="left:1167.00px;top:655.09px;font-size:15.60px;line-height:19px;color:#34373f;letter-spacing:0.115px;white-space:pre;">for </span><span class="t" style="left:1190.00px;top:655.09px;font-size:15.60px;line-height:19px;color:#34373f;letter-spacing:-0.548px;">2018.</span>
<span class="t" style="left:984.20px;top:677.66px;font-size:15.40px;line-height:18px;color:#4a63d8;letter-spacing:-0.019px;white-space:pre;">Download </span><span class="t" style="left:1056.80px;top:677.66px;font-size:15.40px;line-height:18px;color:#4a63d8;letter-spacing:-0.463px;">Table</span>
<div class="card" style="left:935px;top:760px;width:968px;height:142px"></div>
<span class="t" style="left:951.10px;top:778.41px;font-size:17.00px;line-height:20px;color:#a9abb3;letter-spacing:-0.053px;white-space:pre;">You </span><span class="t" style="left:984.30px;top:778.41px;font-size:17.00px;line-height:20px;color:#a9abb3;letter-spacing:-0.158px;white-space:pre;">can </span><span class="t" style="left:1015.80px;top:778.41px;font-size:17.00px;line-height:20px;color:#a9abb3;letter-spacing:-0.344px;white-space:pre;">ask </span><span class="t" style="left:1045.60px;top:778.41px;font-size:17.00px;line-height:20px;color:#a9abb3;letter-spacing:0.060px;white-space:pre;">questions </span><span class="t" style="left:1123.70px;top:778.41px;font-size:17.00px;line-height:20px;color:#a9abb3;letter-spacing:0.687px;white-space:pre;">or </span><span class="t" style="left:1145.60px;top:778.41px;font-size:17.00px;line-height:20px;color:#a9abb3;letter-spacing:0.476px;white-space:pre;">perform </span><span class="t" style="left:1212.70px;top:778.41px;font-size:17.00px;line-height:20px;color:#a9abb3;letter-spacing:0.226px;white-space:pre;">operations </span><span class="t" style="left:1299.30px;top:778.41px;font-size:17.00px;line-height:20px;color:#a9abb3;letter-spacing:0.489px;white-space:pre;">on </span><span class="t" style="left:1324.40px;top:778.41px;font-size:17.00px;line-height:20px;color:#a9abb3;letter-spacing:0.211px;white-space:pre;">the </span><span class="t" style="left:1353.60px;top:778.41px;font-size:17.00px;line-height:20px;color:#a9abb3;letter-spacing:0.369px;white-space:pre;">file </span><span class="t" style="left:1381.90px;top:778.41px;font-size:17.00px;line-height:20px;color:#a9abb3;letter-spacing:0.500px;white-space:pre;">to </span><span class="t" style="left:1402.30px;top:778.41px;font-size:17.00px;line-height:20px;color:#a9abb3;letter-spacing:0.189px;white-space:pre;">be </span><span class="t" style="left:1426.50px;top:778.41px;font-size:17.00px;line-height:20px;color:#a9abb3;letter-spacing:-0.131px;">analyzed</span>
<div class="a" style="left:1830px;top:863px;width:62px;height:28px;border-radius:3px;background:#435bf8"></div>
<span class="t" style="left:1844.70px;top:868.10px;font-size:15.00px;line-height:18px;color:#fff;letter-spacing:-0.508px;">Send</span>
<div class="a" style="left:911px;top:483px;width:6px;height:18px;background:linear-gradient(90deg,#f4f4f8 0 1.5px,#dcdde3 1.5px 2.5px,#f4f4f8 2.5px 4px,#dcdde3 4px 5px,#f4f4f8 5px)"></div>
<svg class="a" style="left:0;top:0;z-index:8;pointer-events:none" width="1920" height="919"><path d="M744.800 528.100L745.300 529.100L918.100 443.700L920.100 447.700L927 437L914.300 436.100L916.300 440.100Z" fill="#ea2a22"/></svg>
<div id="ovg"></div><div id="ov">
<div class="o" style="top:0;height:23px">
<i class="h" style="height:23px"></i>
<i class="k0" style="height:23px;line-height:25px;text-align:center;padding:0;letter-spacing:0;font-size:12.6px;border-color:#d6d6d6;background:#d6d6d6;color:#217346;">A</i>
<i class="k1" style="height:23px;line-height:25px;text-align:center;padding:0;letter-spacing:0;font-size:12.6px;border-color:#d6d6d6;background:#efefef;color:#444;">B</i>
<i class="k2" style="height:23px;line-height:25px;text-align:center;padding:0;letter-spacing:0;font-size:12.6px;border-color:#d6d6d6;background:#efefef;color:#444;">C</i>
<i class="k3" style="height:23px;line-height:25px;text-align:center;padding:0;letter-spacing:0;font-size:12.6px;border-color:#d6d6d6;background:#efefef;color:#444;">D</i>
<i class="k4" style="height:23px;line-height:25px;text-align:center;padding:0;letter-spacing:0;font-size:12.6px;border-color:#d6d6d6;background:#efefef;color:#444;">E</i>
<i class="k5" style="height:23px;line-height:25px;text-align:center;padding:0;letter-spacing:0;font-size:12.6px;border-color:#d6d6d6;background:#efefef;color:#444;">F</i>
<i class="k6" style="height:23px;line-height:25px;text-align:center;padding:0;letter-spacing:0;font-size:12.6px;border-color:#d6d6d6;background:#efefef;color:#444;">G</i>
<i class="k7" style="height:23px;line-height:25px;text-align:center;padding:0;letter-spacing:0;font-size:12.6px;border-color:#d6d6d6;background:#efefef;color:#444;">H</i>
<i class="k8" style="height:23px;background:#efefef;border-color:#d6d6d6"></i>
</div>
<svg class="a" style="left:13px;top:8px" width="8" height="8" viewBox="0 0 8 8"><path d="M7 0.600V6.700H0.300Z" fill="#555"/></svg>
<div class="o" style="top:23px">
<i class="h" style="background:#d6d6d6;color:#1f8a70">1</i>
<i class="k0">OrderDate</i>
<i class="k1">Region</i>
<i class="k2">Manager</i>
<i class="k3">SalesMan</i>
<i class="k4">Item</i>
<i class="k5">Units</i>
<i class="k6" style="letter-spacing:.2px">Unit_price</i>
<i class="k7" style="letter-spacing:.2px">Sale_amt</i>
<i class="k8"></i>
</div>
<div class="o" style="top:43px">
<i class="h">2</i>
<i class="k0">1/6/18</i>
<i class="k1">East</i>
<i class="k2">Martha</i>
<i class="k3">Alexander</i>
<i class="k4" style="letter-spacing:.65px">Television</i>
<i class="k5 n">95</i>
<i class="k6 n">1198</i>
<i class="k7 n">113810</i>
<i class="k8"></i>
<b class="g" style="top:0"></b>
</div>
<div class="o" style="top:63px">
<i class="h">3</i>
<i class="k0">1/23/18</i>
<i class="k1">Central</i>
<i class="k2">Hermann</i>
<i class="k3">Shelli</i>
<i class="k4" style="letter-spacing:.2px">Home Thea</i>
<i class="k5 n">50</i>
<i class="k6 n">500</i>
<i class="k7 n">25000</i>
<i class="k8"></i>
</div>
<div class="o" style="top:83px">
<i class="h">4</i>
<i class="k0">2/9/18</i>
<i class="k1">Central</i>
<i class="k2">Hermann</i>
<i class="k3">Luis</i>
<i class="k4" style="letter-spacing:.65px">Television</i>
<i class="k5 n">36</i>
<i class="k6 n">1198</i>
<i class="k7 n">43128</i>
<i class="k8"></i>
<b class="g" style="top:0"></b>
</div>
<div class="o" style="top:103px">
<i class="h">5</i>
<i class="k0">2/26/18</i>
<i class="k1">Central</i>
<i class="k2">Timothy</i>
<i class="k3">David</i>
<i class="k4">Cell Phone</i>
<i class="k5 n">27</i>
<i class="k6 n">225</i>
<i class="k7 n">6075</i>
<i class="k8"></i>
</div>
<div class="o" style="top:123px">
<i class="h">6</i>
<i class="k0">3/15/18</i>
<i class="k1">West</i>
<i class="k2">Timothy</i>
<i class="k3">Stephen</i>
<i class="k4" style="letter-spacing:.65px">Television</i>
<i class="k5 n">56</i>
<i class="k6 n">1198</i>
<i class="k7 n">67088</i>
<i class="k8"></i>
</div>
<div class="o" style="top:143px">
<i class="h">7</i>
<i class="k0">4/1/18</i>
<i class="k1">East</i>
<i class="k2">Martha</i>
<i class="k3">Alexander</i>
<i class="k4" style="letter-spacing:.2px">Home Thea</i>
<i class="k5 n">60</i>
<i class="k6 n">500</i>
<i class="k7 n">30000</i>
<i class="k8"></i>
<b class="g" style="top:0"></b>
</div>
<div class="o" style="top:163px">
<i class="h">8</i>
<i class="k0">4/18/18</i>
<i class="k1">Central</i>
<i class="k2">Martha</i>
<i class="k3">Steven</i>
<i class="k4" style="letter-spacing:.65px">Television</i>
<i class="k5 n">75</i>
<i class="k6 n">1198</i>
<i class="k7 n">89850</i>
<i class="k8"></i>
</div>
<div class="o" style="top:183px">
<i class="h">9</i>
<i class="k0">5/5/18</i>
<i class="k1">Central</i>
<i class="k2">Hermann</i>
<i class="k3">Luis</i>
<i class="k4" style="letter-spacing:.65px">Television</i>
<i class="k5 n">90</i>
<i class="k6 n">1198</i>
<i class="k7 n">107820</i>
<i class="k8"></i>
<b class="g" style="top:0"></b>
</div>
<div class="o" style="top:203px">
<i class="h">10</i>
<i class="k0">5/22/18</i>
<i class="k1">West</i>
<i class="k2">Douglas</i>
<i class="k3">Michael</i>
<i class="k4" style="letter-spacing:.65px">Television</i>
<i class="k5 n">32</i>
<i class="k6 n">1198</i>
<i class="k7 n">38336</i>
<i class="k8"></i>
</div>
<div class="o" style="top:223px">
<i class="h">11</i>
<i class="k0">6/8/18</i>
<i class="k1">East</i>
<i class="k2">Martha</i>
<i class="k3">Alexander</i>
<i class="k4" style="letter-spacing:.2px">Home Thea</i>
<i class="k5 n">60</i>
<i class="k6 n">500</i>
<i class="k7 n">30000</i>
<i class="k8"></i>
<b class="g" style="top:0"></b>
</div>
<div class="o" style="top:243px">
<i class="h">12</i>
<i class="k0">6/25/18</i>
<i class="k1">Central</i>
<i class="k2">Hermann</i>
<i class="k3">Sigal</i>
<i class="k4" style="letter-spacing:.65px">Television</i>
<i class="k5 n">90</i>
<i class="k6 n">1198</i>
<i class="k7 n">107820</i>
<i class="k8"></i>
</div>
<div class="o" style="top:263px">
<i class="h">13</i>
<i class="k0">7/12/18</i>
<i class="k1">East</i>
<i class="k2">Martha</i>
<i class="k3">Diana</i>
<i class="k4" style="letter-spacing:.2px">Home Thea</i>
<i class="k5 n">29</i>
<i class="k6 n">500</i>
<i class="k7 n">14500</i>
<i class="k8"></i>
<b class="g" style="top:0"></b>
</div>
<div class="o" style="top:283px">
<i class="h">14</i>
<i class="k0">7/29/18</i>
<i class="k1">East</i>
<i class="k2">Douglas</i>
<i class="k3">Karen</i>
<i class="k4" style="letter-spacing:.2px">Home Thea</i>
<i class="k5 n">81</i>
<i class="k6 n">500</i>
<i class="k7 n">40500</i>
<i class="k8"></i>
</div>
<div class="o" style="top:303px">
<i class="h">15</i>
<i class="k0">8/15/18</i>
<i class="k1">East</i>
<i class="k2">Martha</i>
<i class="k3">Alexander</i>
<i class="k4" style="letter-spacing:.65px">Television</i>
<i class="k5 n">35</i>
<i class="k6 n">1198</i>
<i class="k7 n">41930</i>
<i class="k8"></i>
</div>
<div class="o" style="top:323px">
<i class="h">16</i>
<i class="k0">9/1/18</i>
<i class="k1">Central</i>
<i class="k2">Douglas</i>
<i class="k3">John</i>
<i class="k4">Desk</i>
<i class="k5 n">2</i>
<i class="k6 n">125</i>
<i class="k7 n">250</i>
<i class="k8"></i>
<b class="g" style="top:0"></b>
</div>
<div class="o" style="top:343px">
<i class="h">17</i>
<i class="k0">9/18/18</i>
<i class="k1">East</i>
<i class="k2">Martha</i>
<i class="k3">Alexander</i>
<i class="k4">Video Games</i>
<i class="k5 n">16</i>
<i class="k6 n">58.5</i>
<i class="k7 n">936</i>
<i class="k8"></i>
</div>
<div class="o" style="top:363px">
<i class="h">18</i>
<i class="k0">10/5/18</i>
<i class="k1">Central</i>
<i class="k2">Hermann</i>
<i class="k3">Sigal</i>
<i class="k4" style="letter-spacing:.2px">Home Thea</i>
<i class="k5 n">28</i>
<i class="k6 n">500</i>
<i class="k7 n">14000</i>
<i class="k8"></i>
<b class="g" style="top:0"></b>
</div>
<div class="o" style="top:383px">
<i class="h">19</i>
<i class="k0">10/22/18</i>
<i class="k1">East</i>
<i class="k2">Martha</i>
<i class="k3">Alexander</i>
<i class="k4">Cell Phone</i>
<i class="k5 n">64</i>
<i class="k6 n">225</i>
<i class="k7 n">14400</i>
<i class="k8"></i>
</div>
<div class="o" style="top:403px">
<i class="h">20</i>
<i class="k0">11/8/18</i>
<i class="k1">East</i>
<i class="k2">Douglas</i>
<i class="k3">Karen</i>
<i class="k4">Cell Phone</i>
<i class="k5 n">15</i>
<i class="k6 n">225</i>
<i class="k7 n">3375</i>
<i class="k8"></i>
<b class="g" style="top:0"></b>
</div>
<div class="o" style="top:423px">
<i class="h">21</i>
<i class="k0">11/25/18</i>
<i class="k1">Central</i>
<i class="k2">Hermann</i>
<i class="k3">Shelli</i>
<i class="k4">Video Games</i>
<i class="k5 n">96</i>
<i class="k6 n">58.5</i>
<i class="k7 n">5616</i>
<i class="k8"></i>
</div>
<div class="o" style="top:443px">
<i class="h">22</i>
<i class="k0">12/12/18</i>
<i class="k1">Central</i>
<i class="k2">Douglas</i>
<i class="k3">John</i>
<i class="k4" style="letter-spacing:.65px">Television</i>
<i class="k5 n">67</i>
<i class="k6 n">1198</i>
<i class="k7 n">80266</i>
<i class="k8"></i>
<b class="g" style="top:0"></b>
</div>
<div class="o" style="top:463px">
<i class="h">23</i>
<i class="k0">12/29/18</i>
<i class="k1">East</i>
<i class="k2">Douglas</i>
<i class="k3">Karen</i>
<i class="k4">Video Games</i>
<i class="k5 n">74</i>
<i class="k6 n">58.5</i>
<i class="k7 n">4329</i>
<i class="k8"></i>
</div>
<div class="a" style="left:30.3px;top:21.3px;width:74.200px;height:22.200px;border:2.200px solid #3a8224"></div>
<div class="a" style="left:100px;top:39px;width:7px;height:7px;background:#3a7d22;border:1px solid #fff"></div>
</div>
</body></html>
